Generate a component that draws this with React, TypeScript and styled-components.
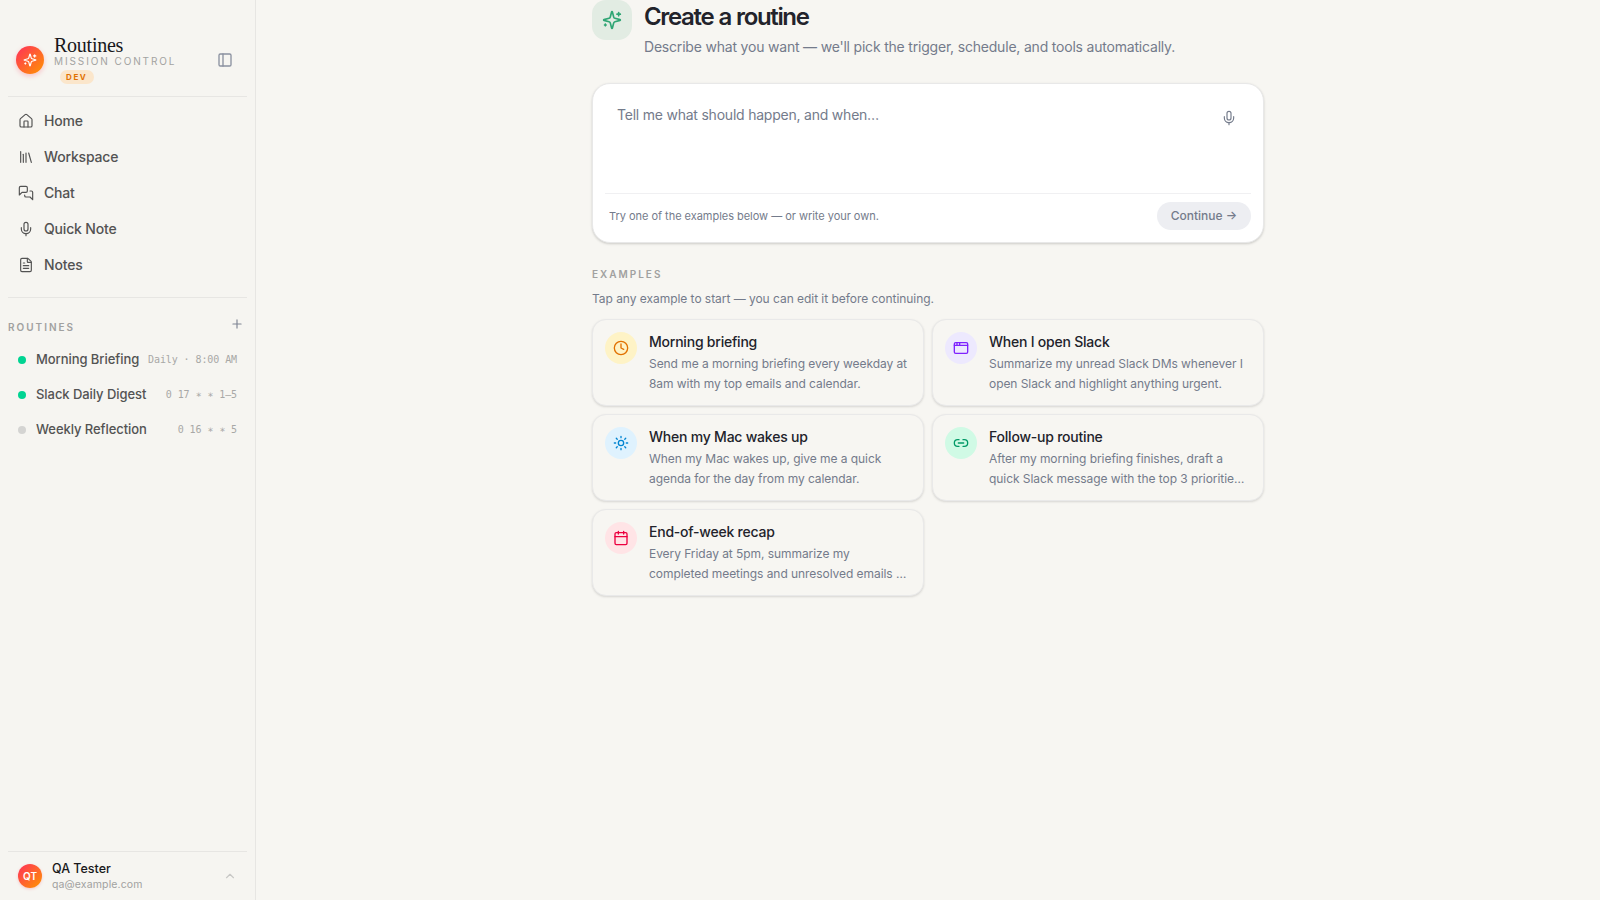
import React from "react";
import styled, { createGlobalStyle } from "styled-components";
import { PanelLeft, House, Library, Mic, FileText, Plus, ChevronUp } from "lucide-react";

const Global = createGlobalStyle`
  *, *::before, *::after { box-sizing: border-box; }
  body {
    margin: 0;
    background: #f7f6f2;
    font-family: Inter, sans-serif;
    color: #22232b;
    -webkit-font-smoothing: antialiased;
  }
  svg { display: block; flex-shrink: 0; }
  p, h1, h2, h3 { margin: 0; font-weight: inherit; }
  button { font-family: inherit; border: 0; background: none; padding: 0; }
`;

const Shell = styled.div`
  display: flex;
  height: 900px;
  overflow: hidden;
`;

const Sidebar = styled.aside`
  width: 256px;
  flex-shrink: 0;
  display: flex;
  flex-direction: column;
  padding: 32px 8px 0;
  background: #f6f5f1;
  border-right: 1px solid #e7e6e3;
`;

const Brand = styled.header`
  display: flex;
  align-items: center;
  height: 65px;
  padding: 0 14px 8px 8px;
  border-bottom: 1px solid #e7e6e3;
`;

const BrandMark = styled.div`
  display: grid;
  place-items: center;
  width: 28px;
  height: 28px;
  border-radius: 50%;
  color: #fff;
  background: linear-gradient(135deg, #ff2f5b, #ff9500);
  box-shadow: 0 2px 5px rgba(255, 60, 90, 0.28);
`;

const BrandText = styled.div`
  flex: 1;
  margin-left: 10px;
`;

const BrandName = styled.div`
  font: 400 20px/18px "Liberation Serif", serif;
  letter-spacing: -0.25px;
  color: #18181b;
`;

const BrandSub = styled.div`
  font-size: 10px;
  line-height: 15px;
  letter-spacing: 1.9px;
  color: #a3a3a1;
`;

const DevBadge = styled.span`
  display: block;
  width: 34px;
  height: 14px;
  margin: 1px 0 0 6px;
  padding-left: 6px;
  border-radius: 7px;
  background: #fbe6cb;
  color: #e17100;
  font-size: 8px;
  font-weight: 700;
  line-height: 14px;
  letter-spacing: 1.6px;
`;

const IconButton = styled.button`
  color: #8b91a0;
`;

const Nav = styled.nav`
  height: 201px;
  padding-top: 6px;
  border-bottom: 1px solid #e7e6e3;
`;

const NavItem = styled.a`
  display: flex;
  align-items: center;
  gap: 10px;
  height: 36px;
  padding: 0 0 1px 10px;
  font-size: 14px;
  font-weight: 500;
  letter-spacing: -0.18px;
  color: #535353;
`;

const SectionHead = styled.div`
  display: flex;
  align-items: flex-start;
  justify-content: space-between;
  height: 44px;
  padding: 19px 3px 0 0;
  color: #7f8594;
`;

const SectionTitle = styled.h2`
  margin-top: 3px;
  font-size: 10px;
  font-weight: 600;
  line-height: 15px;
  letter-spacing: 2px;
  color: #a1a1a0;
`;

const RoutineRow = styled.div`
  display: flex;
  align-items: center;
  height: 35px;
  padding: 0 10px;
`;

const Dot = styled.span<{ $on: boolean }>`
  width: 8px;
  height: 8px;
  margin-right: 10px;
  border-radius: 50%;
  background: ${(p) => (p.$on ? "#00d492" : "#d4d4d2")};
`;

const RoutineName = styled.span`
  flex: 1;
  padding-bottom: 2px;
  font-size: 13px;
  font-weight: 500;
  letter-spacing: -0.06px;
  white-space: nowrap;
  color: #535353;
`;

const RoutineTime = styled.span`
  font-family: "DejaVu Sans Mono", monospace;
  font-size: 10px;
  letter-spacing: -0.09px;
  white-space: nowrap;
  color: #a8a8a6;
`;

const Account = styled.footer`
  display: flex;
  align-items: center;
  height: 49px;
  margin-top: auto;
  padding: 0 10px;
  border-top: 1px solid #e7e6e3;
  color: #c8c8c6;
`;

const Avatar = styled.div`
  width: 24px;
  height: 24px;
  margin-right: 10px;
  border-radius: 50%;
  background: linear-gradient(135deg, #ff2f5b, #ff9500);
  box-shadow: 0 1px 3px rgba(255, 60, 90, 0.25);
  color: #fff;
  font-size: 10px;
  font-weight: 600;
  line-height: 25px;
  text-align: center;
`;

const AccountText = styled.div`
  flex: 1;
`;

const AccountName = styled.div`
  font-size: 12.5px;
  font-weight: 500;
  line-height: 16px;
  color: #18181b;
`;

const AccountMail = styled.div`
  font-size: 10.5px;
  line-height: 15px;
  letter-spacing: 0.13px;
  color: #a1a1a0;
`;

const Main = styled.main`
  flex: 1;
  display: flex;
  justify-content: center;
`;

const Column = styled.div`
  width: 672px;
`;

const Hero = styled.header`
  display: flex;
  gap: 12px;
  height: 83px;
`;

const HeroIcon = styled.div`
  display: grid;
  place-items: center;
  width: 40px;
  height: 40px;
  border-radius: 14px;
  background: #e2ece3;
  color: #2fa574;
`;

const HeroTitle = styled.h1`
  padding-top: 1px;
  font-size: 24px;
  font-weight: 600;
  line-height: 32px;
  letter-spacing: -1.35px;
  word-spacing: 0.5px;
  color: #22232b;
`;

const HeroSub = styled.p`
  margin-top: 3px;
  font-size: 14px;
  line-height: 22px;
  letter-spacing: -0.197px;
  color: #747b8b;
`;

const Composer = styled.section`
  height: 160px;
  padding: 12px;
  border: 1px solid #e8e8e8;
  border-radius: 18px;
  background: #fff;
  box-shadow: 0 1px 3px rgba(0, 0, 0, 0.1), 0 1px 2px rgba(0, 0, 0, 0.08);
`;

const Prompt = styled.div`
  display: flex;
  justify-content: space-between;
  height: 98px;
  padding: 8px 14px 0 12px;
  border-bottom: 1px solid #f0f0f2;
  font-size: 14px;
  line-height: 22px;
  letter-spacing: -0.22px;
  color: #747b8b;
`;

const MicButton = styled(IconButton)`
  align-self: flex-start;
  margin-top: 6px;
  color: #747b8b;
`;

const ComposerFoot = styled.div`
  display: flex;
  align-items: center;
  justify-content: space-between;
  margin-top: 8px;
  padding-left: 4px;
  font-size: 11px;
  letter-spacing: -0.03px;
  color: #747b8b;
`;

const Continue = styled.button`
  width: 94px;
  height: 28px;
  padding-bottom: 1px;
  border-radius: 14px;
  background: #edeef2;
  color: #747b8b;
  font-size: 12px;
  font-weight: 500;
`;

const Arrow = styled.span`
  font-feature-settings: "case";
`;

const ExamplesTitle = styled.h2`
  margin-top: 24px;
  font-size: 10px;
  font-weight: 600;
  line-height: 15px;
  letter-spacing: 2px;
  color: #a1a1a0;
`;

const ExamplesHint = styled.p`
  margin: 8px 0 11px;
  font-size: 12px;
  line-height: 18px;
  letter-spacing: -0.04px;
  color: #747b8b;
`;

const Grid = styled.div`
  display: grid;
  grid-template-columns: 1fr 1fr;
  gap: 8px;
`;

const Card = styled.article`
  display: flex;
  gap: 12px;
  height: 87px;
  padding: 12px;
  border: 1px solid #e9e9e9;
  border-radius: 14px;
  background: #f7f6f2;
  box-shadow: 0 1px 3px rgba(0, 0, 0, 0.08), 0 1px 2px rgba(0, 0, 0, 0.06);
`;

const CardIcon = styled.div<{ $bg: string; $fg: string }>`
  display: grid;
  place-items: center;
  flex-shrink: 0;
  width: 32px;
  height: 32px;
  border-radius: 50%;
  background: ${(p) => p.$bg};
  color: ${(p) => p.$fg};
`;

const CardTitle = styled.h3`
  font-size: 14px;
  font-weight: 500;
  line-height: 20px;
  letter-spacing: -0.22px;
  color: #22232b;
`;

const CardText = styled.p`
  margin-top: 2px;
  font-size: 12px;
  line-height: 20px;
  letter-spacing: -0.06px;
  white-space: pre-line;
  color: #747b8b;
`;

interface GlyphProps {
  children: React.ReactNode;
  size?: number;
  weight?: number;
}

const Glyph = ({ children, size = 16, weight = 2 }: GlyphProps) => (
  <svg
    width={size}
    height={size}
    viewBox="0 0 24 24"
    fill="none"
    stroke="currentColor"
    strokeWidth={weight}
    strokeLinecap="round"
    strokeLinejoin="round"
  >
    {children}
  </svg>
);

const SparkGlyph = ({ size }: { size: number }) => (
  <Glyph size={size}>
    <path d="M9.937 15.500A2 2 0 0 0 8.500 14.063l-6.135-1.582a.5.5 0 0 1 0-.962L8.500 9.936A2 2 0 0 0 9.937 8.500l1.582-6.135a.5.5 0 0 1 .963 0L14.063 8.500A2 2 0 0 0 15.500 9.937l6.135 1.581a.5.5 0 0 1 0 .964L15.500 14.063a2 2 0 0 0-1.437 1.437l-1.582 6.135a.5.5 0 0 1-.963 0z" />
    <path d="M20 3v4M22 5h-4M4 17v2M5 18H3" />
  </Glyph>
);

const ChatGlyph = () => (
  <Glyph weight={1.75}>
    <path d="M14 9a2 2 0 0 1-2 2H6l-4 4V4a2 2 0 0 1 2-2h8a2 2 0 0 1 2 2z" />
    <path d="M18 9h2a2 2 0 0 1 2 2v11l-4-4h-6a2 2 0 0 1-2-2v-1" />
  </Glyph>
);

const navItems = [
  { label: "Home", icon: <House size={16} strokeWidth={1.75} /> },
  { label: "Workspace", icon: <Library size={16} strokeWidth={1.75} /> },
  { label: "Chat", icon: <ChatGlyph /> },
  { label: "Quick Note", icon: <Mic size={16} strokeWidth={1.75} /> },
  { label: "Notes", icon: <FileText size={16} strokeWidth={1.75} /> },
];

const routines = [
  { name: "Morning Briefing", time: "Daily · 8:00 AM", on: true },
  { name: "Slack Daily Digest", time: "0 17 ∗ ∗ 1–5", on: true },
  { name: "Weekly Reflection", time: "0 16 ∗ ∗ 5", on: false },
];

const examples = [
  {
    title: "Morning briefing",
    text: "Send me a morning briefing every weekday at\n8am with my top emails and calendar.",
    bg: "#fef3c6",
    fg: "#e17100",
    icon: (
      <Glyph>
        <circle cx="12" cy="12" r="10" />
        <path d="M12 6v6l4 2" />
      </Glyph>
    ),
  },
  {
    title: "When I open Slack",
    text: "Summarize my unread Slack DMs whenever I\nopen Slack and highlight anything urgent.",
    bg: "#ede9fe",
    fg: "#7f22fe",
    icon: (
      <Glyph>
        <rect x="2" y="4" width="20" height="16" rx="2" />
        <path d="M2 8h20M6 4v4M10 4v4" />
      </Glyph>
    ),
  },
  {
    title: "When my Mac wakes up",
    text: "When my Mac wakes up, give me a quick\nagenda for the day from my calendar.",
    bg: "#dff2fe",
    fg: "#0084d1",
    icon: (
      <Glyph>
        <circle cx="12" cy="12" r="4" />
        <path d="M12 2v2M12 20v2M4.930 4.930l1.410 1.410M17.660 17.660l1.410 1.410M2 12h2M20 12h2M6.340 17.660l-1.410 1.410M19.070 4.930l-1.410 1.410" />
      </Glyph>
    ),
  },
  {
    title: "Follow-up routine",
    text: "After my morning briefing finishes, draft a\nquick Slack message with the top 3 prioritie…",
    bg: "#d0fae5",
    fg: "#009966",
    icon: (
      <Glyph>
        <path d="M9 17H7A5 5 0 0 1 7 7h2M15 7h2a5 5 0 1 1 0 10h-2M8 12h8" />
      </Glyph>
    ),
  },
  {
    title: "End-of-week recap",
    text: "Every Friday at 5pm, summarize my\ncompleted meetings and unresolved emails …",
    bg: "#ffe4e6",
    fg: "#ec003f",
    icon: (
      <Glyph>
        <path d="M8 2v4M16 2v4M3 10h18" />
        <rect x="3" y="4" width="18" height="18" rx="2" />
      </Glyph>
    ),
  },
];

export default function App() {
  return (
    <>
      <Global />
      <Shell>
        <Sidebar>
          <Brand>
            <BrandMark>
              <SparkGlyph size={14} />
            </BrandMark>
            <BrandText>
              <BrandName>Routines</BrandName>
              <BrandSub>MISSION CONTROL</BrandSub>
              <DevBadge>DEV</DevBadge>
            </BrandText>
            <IconButton aria-label="Toggle sidebar">
              <PanelLeft size={16} strokeWidth={2} />
            </IconButton>
          </Brand>
          <Nav>
            {navItems.map((item) => (
              <NavItem key={item.label}>
                {item.icon}
                {item.label}
              </NavItem>
            ))}
          </Nav>
          <SectionHead>
            <SectionTitle>ROUTINES</SectionTitle>
            <Plus size={14} strokeWidth={2} />
          </SectionHead>
          {routines.map((r) => (
            <RoutineRow key={r.name}>
              <Dot $on={r.on} />
              <RoutineName>{r.name}</RoutineName>
              <RoutineTime>{r.time}</RoutineTime>
            </RoutineRow>
          ))}
          <Account>
            <Avatar>QT</Avatar>
            <AccountText>
              <AccountName>QA Tester</AccountName>
              <AccountMail>qa@example.com</AccountMail>
            </AccountText>
            <ChevronUp size={14} strokeWidth={2} />
          </Account>
        </Sidebar>
        <Main>
          <Column>
            <Hero>
              <HeroIcon>
                <SparkGlyph size={20} />
              </HeroIcon>
              <div>
                <HeroTitle>Create a routine</HeroTitle>
                <HeroSub>Describe what you want — we'll pick the trigger, schedule, and tools automatically.</HeroSub>
              </div>
            </Hero>
            <Composer>
              <Prompt>
                Tell me what should happen, and when…
                <MicButton aria-label="Dictate">
                  <Mic size={16} strokeWidth={1.75} />
                </MicButton>
              </Prompt>
              <ComposerFoot>
                Try one of the examples below — or write your own.
                <Continue>
                  Continue <Arrow>→</Arrow>
                </Continue>
              </ComposerFoot>
            </Composer>
            <ExamplesTitle>EXAMPLES</ExamplesTitle>
            <ExamplesHint>Tap any example to start — you can edit it before continuing.</ExamplesHint>
            <Grid>
              {examples.map((e) => (
                <Card key={e.title}>
                  <CardIcon $bg={e.bg} $fg={e.fg}>
                    {e.icon}
                  </CardIcon>
                  <div>
                    <CardTitle>{e.title}</CardTitle>
                    <CardText>{e.text}</CardText>
                  </div>
                </Card>
              ))}
            </Grid>
          </Column>
        </Main>
      </Shell>
    </>
  );
}
